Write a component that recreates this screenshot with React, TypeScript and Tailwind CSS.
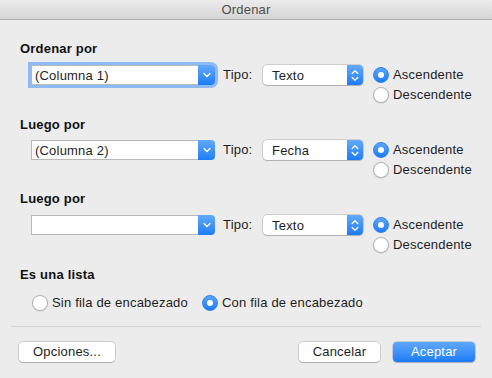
import React from "react";

function ChevronDown() {
  return (
    <svg width="8" height="6" viewBox="0 0 8 6" fill="none">
      <path d="M1 1.5 L4 4.5 L7 1.5" stroke="white" strokeWidth="1.3" strokeLinecap="round" strokeLinejoin="round" />
    </svg>
  );
}

function Stepper() {
  return (
    <svg width="8" height="13" viewBox="0 0 8 13" fill="none">
      <path d="M1.2 4.5 L4 1.7 L6.8 4.5" stroke="white" strokeWidth="1.3" strokeLinecap="round" strokeLinejoin="round" />
      <path d="M1.2 8.5 L4 11.3 L6.8 8.5" stroke="white" strokeWidth="1.3" strokeLinecap="round" strokeLinejoin="round" />
    </svg>
  );
}

function Radio({ checked }: { checked: boolean }) {
  if (checked) {
    return (
      <div className="w-[16px] h-[16px] rounded-full bg-gradient-to-b from-[#5aa5fb] to-[#1a7cf5] border border-[#2f83ea] flex items-center justify-center shrink-0">
        <div className="w-[6px] h-[6px] rounded-full bg-white" />
      </div>
    );
  }
  return (
    <div className="w-[16px] h-[16px] rounded-full bg-white border border-[#b3b3b3] shadow-[0_0.5px_1px_rgba(0,0,0,0.15)] shrink-0" />
  );
}

function Combo({ value, focused }: { value: string; focused?: boolean }) {
  return (
    <div
      className={
        "ml-[11px] w-[184px] h-[20px] flex rounded-r-[4px] " +
        (focused ? "shadow-[0_0_0_3px_#8fbaf3]" : "")
      }
    >
      <div className="flex-1 bg-white border border-[#b8b8b8] border-r-0 flex items-center pl-[3px] text-[13px] text-[#1e1e1e] leading-none">
        {value}
      </div>
      <div className="w-[17px] h-full rounded-r-[4px] bg-gradient-to-b from-[#62a9fa] to-[#1b7cf4] flex items-center justify-center">
        <ChevronDown />
      </div>
    </div>
  );
}

function Popup({ value }: { value: string }) {
  return (
    <div className="w-[100px] h-[20px] flex rounded-[4px] bg-white shadow-[0_0_0_0.5px_rgba(0,0,0,0.25),0_1px_1px_rgba(0,0,0,0.15)]">
      <div className="flex-1 flex items-center pl-[9px] text-[13px] text-[#1e1e1e] leading-none">{value}</div>
      <div className="w-[16px] h-full rounded-r-[4px] bg-gradient-to-b from-[#62a9fa] to-[#1b7cf4] flex items-center justify-center">
        <Stepper />
      </div>
    </div>
  );
}

function SortRow({ combo, tipo, focused }: { combo: string; tipo: string; focused?: boolean }) {
  return (
    <div className="flex items-start h-[40px]">
      <Combo value={combo} focused={focused} />
      <div className="ml-[8px] w-[40px] h-[20px] flex items-center text-[13px] text-[#1e1e1e]">Tipo:</div>
      <Popup value={tipo} />
      <div className="ml-[10px] flex flex-col">
        <div className="h-[20px] flex items-center gap-[4px] text-[13px] text-[#1e1e1e]">
          <Radio checked />
          <span>Ascendente</span>
        </div>
        <div className="h-[20px] flex items-center gap-[4px] text-[13px] text-[#1e1e1e]">
          <Radio checked={false} />
          <span>Descendente</span>
        </div>
      </div>
    </div>
  );
}

function Label({ children, className }: { children: React.ReactNode; className?: string }) {
  return <div className={"h-[16px] leading-[16px] text-[13px] font-bold text-[#111] " + (className || "")}>{children}</div>;
}

export default function App() {
  return (
    <div
      className="w-[492px] h-[378px] bg-[#ececec] flex flex-col overflow-hidden tracking-[0.2px]"
      style={{ fontFamily: '"Liberation Sans", Arial, sans-serif' }}
    >
      <div className="h-[20px] shrink-0 bg-gradient-to-b from-[#ebebeb] to-[#d5d5d5] border-b border-[#b1b1b1] flex items-center justify-center text-[13px] text-[#4d4d4d]">
        Ordenar
      </div>
      <div className="flex flex-col pl-[20px] pt-[21px]">
        <Label>Ordenar por</Label>
        <div className="mt-[8px]">
          <SortRow combo="(Columna 1)" tipo="Texto" focused />
        </div>
        <Label className="mt-[12px]">Luego por</Label>
        <div className="mt-[7px]">
          <SortRow combo="(Columna 2)" tipo="Fecha" />
        </div>
        <Label className="mt-[11px]">Luego por</Label>
        <div className="mt-[8px]">
          <SortRow combo="" tipo="Texto" />
        </div>
        <Label className="mt-[12px]">Es una lista</Label>
        <div className="mt-[10px] h-[20px] flex items-center pl-[12px] text-[13px] text-[#1e1e1e]">
          <div className="flex items-center gap-[4px]">
            <Radio checked={false} />
            <span>Sin fila de encabezado</span>
          </div>
          <div className="flex items-center gap-[4px] ml-[14px]">
            <Radio checked />
            <span>Con fila de encabezado</span>
          </div>
        </div>
      </div>
      <div className="mt-[13px] mx-[11px] h-px bg-[#d4d4d4]" />
      <div className="mt-[15px] flex items-center px-[19px] text-[13px]">
        <button className="w-[96px] h-[20px] rounded-[4px] bg-white shadow-[0_0_0_0.5px_rgba(0,0,0,0.25),0_1px_1px_rgba(0,0,0,0.15)] text-[#1e1e1e] flex items-center justify-center">
          Opciones...
        </button>
        <div className="flex-1" />
        <button className="w-[81px] h-[20px] rounded-[4px] bg-white shadow-[0_0_0_0.5px_rgba(0,0,0,0.25),0_1px_1px_rgba(0,0,0,0.15)] text-[#1e1e1e] flex items-center justify-center">
          Cancelar
        </button>
        <button className="ml-[13px] mr-[-2px] w-[82px] h-[20px] rounded-[4px] bg-gradient-to-b from-[#5fa8fb] to-[#1a7bf5] shadow-[0_0_0_0.5px_rgba(0,60,160,0.35),0_1px_1px_rgba(0,0,0,0.15)] text-white flex items-center justify-center">
          Aceptar
        </button>
      </div>
    </div>
  );
}
